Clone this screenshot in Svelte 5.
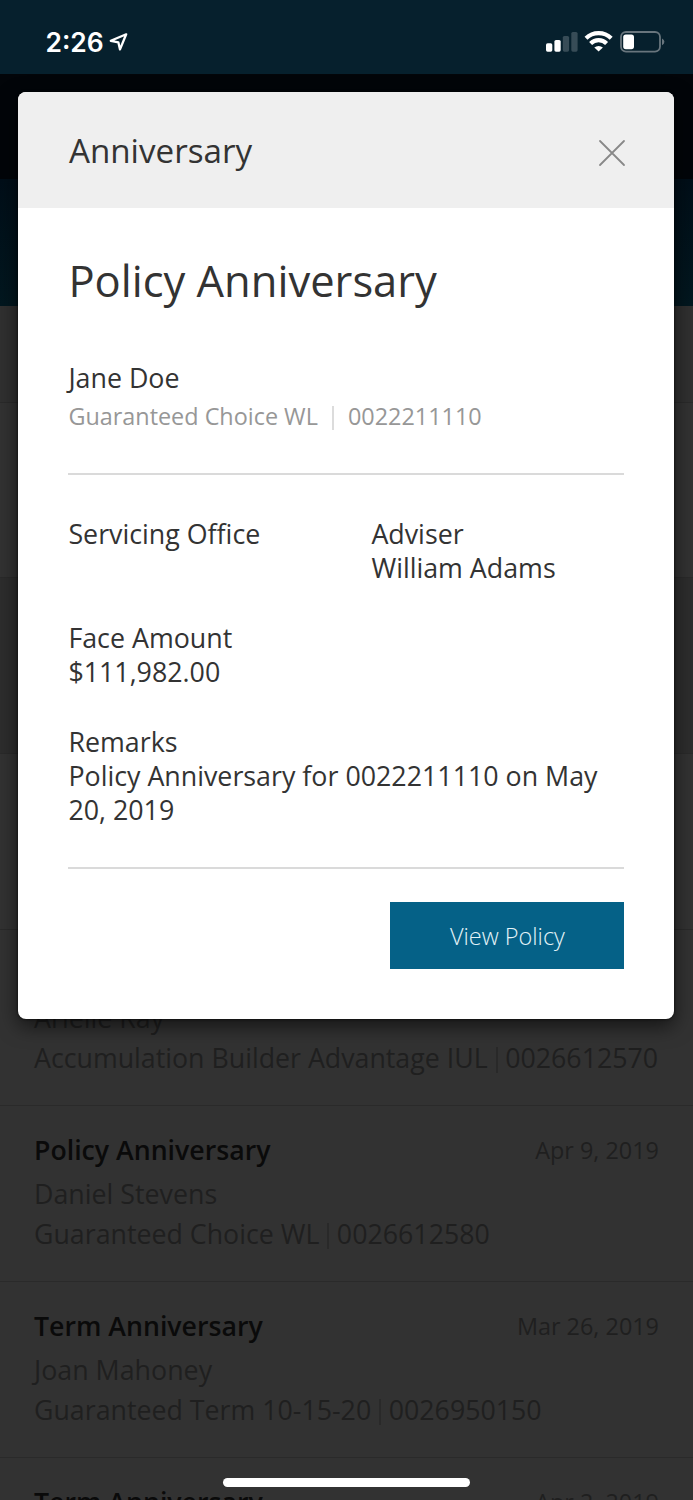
<script>
  let open = true;

  const policy = {
    title: "Policy Anniversary",
    client: "Jane Doe",
    product: "Guaranteed Choice WL",
    number: "0022211110"
  };

  const fields = [
    { label: "Servicing Office", value: "" },
    { label: "Adviser", value: "William Adams" },
    { label: "Face Amount", value: "$111,982.00", wide: true },
    {
      label: "Remarks",
      value: "Policy Anniversary for 0022211110 on May 20, 2019",
      wide: true
    }
  ];

  const rows = [
    { id: 1 },
    { id: 2, read: true },
    { id: 3 },
    {
      id: 4,
      name: "Arielle Ray",
      product: "Accumulation Builder Advantage IUL",
      number: "0026612570"
    },
    {
      id: 5,
      title: "Policy Anniversary",
      date: "Apr 9, 2019",
      name: "Daniel Stevens",
      product: "Guaranteed Choice WL",
      number: "0026612580"
    },
    {
      id: 6,
      title: "Term Anniversary",
      date: "Mar 26, 2019",
      name: "Joan Mahoney",
      product: "Guaranteed Term 10-15-20",
      number: "0026950150"
    },
    { id: 7, title: "Term Anniversary", date: "Apr 2, 2019" }
  ];

  function close() {
    open = false;
  }
</script>

<div class="screen">
  <header class="status">
    <div class="time">
      <span>2:26</span>
      <svg width="20" height="20" viewBox="0 0 20 20">
        <path d="M17.2 2.3 L1.8 8.8 L9.4 10.4 L11 17.4 Z" fill="none" stroke="#fff" stroke-width="2.3" stroke-linejoin="round" />
      </svg>
    </div>
    <svg width="120" height="24" viewBox="0 0 120 24">
      <g fill="#fff">
        <rect x="2" y="13.3" width="6.3" height="8.4" rx="1.6" />
        <rect x="10.4" y="10" width="6.3" height="11.7" rx="1.6" />
        <rect x="18.8" y="6" width="6.3" height="15.7" rx="1.6" opacity="0.2" />
        <rect x="27.3" y="2" width="6.3" height="19.7" rx="1.6" opacity="0.2" />
      </g>
      <g fill="none" stroke="#fff" stroke-width="4.2">
        <path d="M42 8.2 A18.2 18.2 0 0 1 67.2 8.2" />
        <path d="M46.6 13.5 A11.4 11.4 0 0 1 62.6 13.5" />
      </g>
      <path d="M54.6 21.6 L50.3 17.6 A6.3 6.3 0 0 1 58.9 17.6 Z" fill="#fff" />
      <rect x="77" y="2" width="39" height="19.6" rx="5" fill="none" stroke="#68757d" stroke-width="1.8" />
      <rect x="79.2" y="4.4" width="10.8" height="14.8" rx="2.6" fill="#fff" />
      <path d="M118 8.4 Q120.4 9.6 120.4 11.8 Q120.4 14 118 15.2 Z" fill="#68757d" />
    </svg>
  </header>

  <div class="navbar"></div>
  <div class="tabs"></div>
  <div class="filter"></div>

  <ul class="list">
    {#each rows as row (row.id)}
      <li class:read={row.read}>
        <div class="top">
          <h3>{row.title ?? ""}</h3>
          <time>{row.date ?? ""}</time>
        </div>
        <div class="name">{row.name ?? ""}</div>
        {#if row.product}
          <div class="detail">
            <span>{row.product}</span><i></i><span>{row.number}</span>
          </div>
        {/if}
      </li>
    {/each}
  </ul>

  {#if open}
    <section class="modal">
      <div class="head">
        <h2>Anniversary</h2>
        <button class="close" on:click={close} aria-label="Close">
          <svg width="26" height="26" viewBox="0 0 26 26">
            <path d="M1 1 L25 25 M25 1 L1 25" stroke="#888" stroke-width="1.8" stroke-linecap="round" />
          </svg>
        </button>
      </div>
      <div class="body">
        <h1>{policy.title}</h1>
        <div class="client">{policy.client}</div>
        <div class="policy">
          <span>{policy.product}</span><i></i><span>{policy.number}</span>
        </div>
        <hr />
        <dl>
          {#each fields as field}
            <div class:wide={field.wide}>
              <dt>{field.label}</dt>
              <dd>{field.value}</dd>
            </div>
          {/each}
        </dl>
        <hr />
        <button class="view">View Policy</button>
      </div>
    </section>
  {/if}

  <div class="home"></div>
</div>

<style>
  :global(body) {
    margin: 0;
    background: #323232;
  }

  .screen {
    position: relative;
    display: flex;
    flex-direction: column;
    width: 693px;
    height: 1500px;
    overflow: hidden;
    background: #323232;
    font-family: "Open Sans", sans-serif;
    font-size: 26.8px;
  }

  h1,
  h2,
  h3,
  ul,
  dl,
  dd {
    margin: 0;
    padding: 0;
    font-weight: 400;
  }

  svg {
    display: block;
    overflow: visible;
  }

  .status {
    flex: none;
    display: flex;
    justify-content: space-between;
    align-items: center;
    box-sizing: border-box;
    height: 73.5px;
    padding: 10px 29px 0 45.5px;
    background: #06202d;
  }

  .time {
    display: flex;
    align-items: center;
    gap: 5px;
    color: #fff;
    font: 600 26.4px/32px Inter, sans-serif;
  }

  .navbar {
    flex: none;
    height: 105.5px;
    background: #020509;
  }

  .tabs {
    flex: none;
    height: 127px;
    background: linear-gradient(#010e18, #02171f);
  }

  .filter {
    flex: none;
    height: 95.5px;
    background: #303030;
    border-bottom: 1.5px solid #2a2a2a;
  }

  .list {
    flex: none;
    list-style: none;
  }

  li {
    box-sizing: border-box;
    height: 175.9px;
    padding: 22px 34px 0;
    border-bottom: 1.5px solid #2a2a2a;
    color: #1f1f1f;
  }

  .read {
    background: #2d2d2d;
  }

  .top {
    display: flex;
    justify-content: space-between;
    height: 44px;
    line-height: 44px;
  }

  h3 {
    font-size: 26.7px;
    font-weight: 600;
    color: #0a0a0a;
  }

  time {
    font-size: 23.4px;
  }

  .name {
    height: 42px;
    line-height: 43px;
  }

  .detail,
  .policy {
    display: flex;
    align-items: center;
    line-height: 39px;
    white-space: nowrap;
  }

  .detail {
    font-size: 26.75px;
  }

  .detail i {
    width: 2px;
    height: 26px;
    margin: 5px 7.5px 0 8px;
    background: #292929;
  }

  .modal {
    position: absolute;
    top: 92px;
    left: 18.4px;
    width: 656px;
    height: 926.5px;
    border-radius: 8px;
    background: #fff;
    color: #333;
    overflow: hidden;
    box-shadow: 0 0 3px rgba(0, 0, 0, 0.7), 0 7px 20px rgba(0, 0, 0, 0.6);
  }

  .head {
    display: flex;
    align-items: center;
    justify-content: space-between;
    box-sizing: border-box;
    height: 116px;
    padding: 0 49.5px 0 50.5px;
    background: #efefef;
  }

  h2 {
    font-size: 33.2px;
  }

  button {
    padding: 0;
    border: none;
    background: none;
    font-family: inherit;
  }

  .close {
    margin-top: 6px;
  }

  .body {
    display: flex;
    flex-direction: column;
    padding: 43px 50px 0;
  }

  h1 {
    font-size: 43.5px;
    line-height: 60px;
  }

  .client {
    margin-top: 48px;
    line-height: 38px;
  }

  .policy {
    font-size: 23.4px;
    line-height: 38px;
    color: #979797;
  }

  .policy i {
    width: 1.5px;
    height: 24px;
    margin: 3px 14px 0 14.5px;
    background: #dcdcdc;
  }

  hr {
    width: 100%;
    height: 2px;
    margin: 38px 0 40.5px;
    border: none;
    background: #dadada;
  }

  dl {
    display: grid;
    grid-template-columns: 303px 1fr;
    row-gap: 34px;
  }

  .wide {
    grid-column: 1 / -1;
  }

  dt {
    line-height: 35.5px;
  }

  dd {
    line-height: 34px;
    min-height: 34.5px;
  }

  dl + hr {
    margin: 39.5px 0 33.5px;
  }

  .view {
    align-self: flex-end;
    width: 234px;
    height: 67px;
    background: #056187;
    color: #e3f3f8;
    font-size: 23.5px;
    font-weight: 300;
  }

  .home {
    position: absolute;
    left: 223px;
    bottom: 13px;
    width: 247px;
    height: 9px;
    border-radius: 5px;
    background: #fff;
  }
</style>
